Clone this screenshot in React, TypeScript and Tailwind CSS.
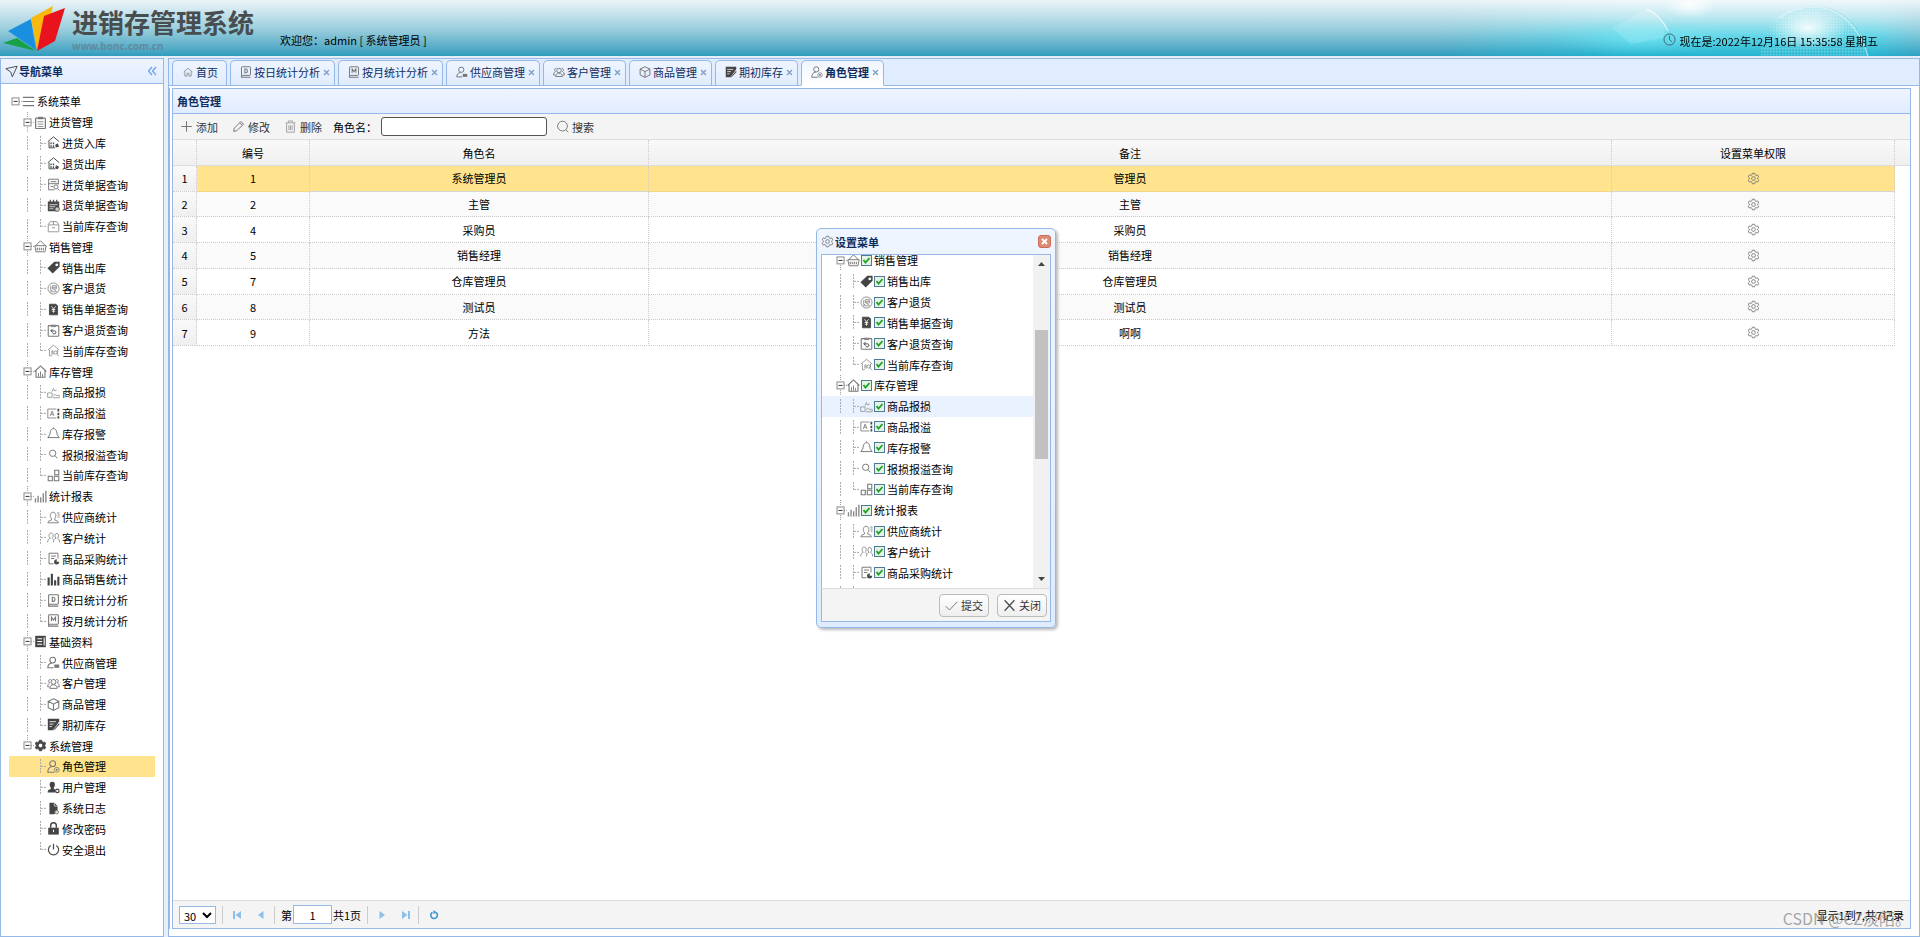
import React, { useState } from "react";

type IconName =
  | "menu" | "clipboard" | "houseIn" | "houseOut" | "docSearch" | "calendar" | "box" | "sale" | "tag"
  | "refund" | "yen" | "clipReturn" | "houseSearch" | "house" | "damage" | "overflow" | "bell" | "search"
  | "blocks" | "bars" | "supplier" | "people" | "purchase" | "barsDark" | "docD" | "docM" | "data"
  | "userTag" | "group" | "cube" | "edit" | "gearDark" | "role" | "userGear" | "log" | "lock" | "power"
  | "home" | "gear" | "plus" | "pencil" | "trash" | "find" | "check" | "cross" | "clock" | "nav";

const D = "#4a4a4a";
const G = "#777777";

const gearPath =
  "M6.6 1.5h2.8l.5 1.9 1.3.8 1.9-.6 1.4 2.4-1.4 1.3v1.4l1.4 1.3-1.4 2.4-1.9-.6-1.3.8-.5 1.9H6.6l-.5-1.9-1.3-.8-1.9.6L1.5 10l1.4-1.3V7.3L1.5 6l1.4-2.4 1.9.6 1.3-.8z";

const icons: Record<IconName, React.ReactNode> = {
  menu: <path d="M1 3h14M1 8h14M1 13h14" stroke={G} strokeWidth="1.500" />,
  clipboard: <><rect x="2" y="2.500" width="12" height="13" rx="1" stroke={G} strokeWidth="1.500" /><path d="M5 1h6v3H5z" fill={G} /><path d="M4.500 7h7M4.500 10h7M4.500 13h7" stroke={G} /></>,
  houseIn: <><path d="M1 7 8 1l7 6M2.500 7v7.500H10" stroke={D} strokeWidth="1.200" /><path d="M5 8v2M8 8v2M5 11.500v2M8 11.500v2" stroke={D} strokeWidth="1.600" /><path d="M10 11l3-2 2 4-4 1z" fill={D} /></>,
  houseOut: <><path d="M1 7 8 1l7 6M2.500 7v7.500H10" stroke={D} strokeWidth="1.200" /><path d="M5 8v2M8 8v2M5 11.500v2M8 11.500v2" stroke={D} strokeWidth="1.600" /><path d="M10 14l1-4 4 2-2 3z" fill={D} /></>,
  docSearch: <><path d="M14 8V1.500H2v13h7M2 7h12M4.500 4.500h7M4.500 10.500h3" stroke={G} strokeWidth="1.200" /><circle cx="11" cy="11" r="2.500" stroke={G} strokeWidth="1.200" /><path d="m13 13 2.500 2.500" stroke={G} strokeWidth="1.200" /></>,
  calendar: <><path d="M1 3h14v7l-3 5H1z" fill={D} /><path d="M4 1v4M8 1v4M12 1v4" stroke={D} strokeWidth="1.500" /><path d="M3 7h10M3 9.500h7M3 12h5" stroke="#fff" strokeWidth=".9" /><circle cx="12.500" cy="12.500" r="2.800" stroke={D} fill="#ccc" /></>,
  box: <><path d="M1.500 5.500 4 2h8l2.500 3.500v9h-13zM1.500 6h13M8 2v4M6 9.500h4" stroke="#999" strokeWidth="1.200" /></>,
  sale: <><path d="M2 7 8 1l6 6M1 7h14l-1.500 7.500h-11z" stroke={G} strokeWidth="1.200" /><path d="M4 9.500v3M6.500 9.500v3M9 9.500v3M11.500 9.500v3" stroke={G} strokeWidth="1.300" /></>,
  tag: <path d="M9 1h6.500v6L7 15.500.5 9zM12 3a1.800 1.800 0 1 0 .1 3.600A1.800 1.800 0 0 0 12 3z" fill="#444" fillRule="evenodd" />,
  refund: <><circle cx="8" cy="8" r="6.800" stroke={G} /><path d="M6.500 4.500h5v4h-5zM6.500 6.500h5M8 8.500l3.500 3M4.500 5v5.500h2M4 12h8" stroke={G} strokeWidth=".9" /></>,
  yen: <><path d="M3 1.500h8l2 2v11H3z" fill="#444" stroke="#444" /><path d="m5.500 4 2.500 3.500L10.500 4M8 7.500V12M5.800 8h4.400M5.800 10h4.400" stroke="#fff" /></>,
  clipReturn: <><rect x="1.500" y="2" width="13" height="13" rx="1" stroke={G} strokeWidth="1.300" /><path d="M5 .8h6v3H5z" fill="#888" /><path d="M7 6 4.500 8.500 7 10.500M5 8.500h4.500c2 0 2 3.500 0 3.500H7" stroke={D} strokeWidth="1.200" /></>,
  houseSearch: <><path d="M1 7.500 8 1.500l7 6M3 7v7.500h3M13 7v5" stroke="#888" /><path d="M6 13V8.500h1.500V13" stroke="#888" /><circle cx="10.500" cy="10.500" r="2" stroke="#888" /><path d="m12 12 2.500 3" stroke="#888" /></>,
  house: <><path d="M.8 8 8 1.200 15.200 8M2.500 7v8h11V7" stroke={G} strokeWidth="1.300" /><path d="M5.500 14.500V10M8 14.500V8M10.500 14.500V11" stroke={G} strokeWidth="1.100" /></>,
  damage: <path d="M.8 8.500h5.500V14H.8zM8 12.500c1-3 2-3 3-1h4v3H7.500M6 7l2-4 1 3 3-1" stroke="#999" strokeWidth="1.100" />,
  overflow: <><path d="M11.500 2.500H1v11h10.500" stroke={G} /><path d="m4 11 2.300-6L8.500 11M4.800 9h3" stroke={G} /><path d="M14 2v3.500M14 7v3M14 11.500V14" stroke={D} strokeWidth="2.200" /></>,
  bell: <path d="M1 13h14L12.500 9.500C12 4 10.500 2 8 2S4 4 3.500 9.500zM8 .5V2" stroke={G} strokeWidth="1.200" />,
  search: <><circle cx="7" cy="6.500" r="3.900" stroke={G} strokeWidth="1.200" /><path d="m9.800 9.500 3.200 3.300" stroke={G} strokeWidth="1.200" /></>,
  blocks: <path d="M1.500 9h5v5.500h-5zM9 9h5.500v5.500H9zM9.500 1.500h5V7h-5z" stroke={G} strokeWidth="1.300" />,
  bars: <path d="M1.800 10v5.500M5 7v8.500M8.200 9v6.500M11.400 4v11.500M14.600 1v14.500" stroke="#888" strokeWidth="1.700" />,
  supplier: <path d="M1 14.500h13l-1-2-3.500-1.500V9.500c2.500-3 1.500-8-2-8s-4.500 5-2 8V11L2 12.500zM12.500 2.500h3M13 5h2.500M13 7.500h2.500" stroke={G} strokeWidth="1.100" />,
  people: <path d="M.8 14c0-3 1.500-4.500 3.200-5C1.500 6 2.500 2.500 5 2.500S8.500 6 6.500 9M8 14c0-3 1-4.500 3-5C9 6.500 9.500 3 12 3s3 4 1 6c1.500.5 2.500 2.500 2.500 5M6.500 9 8 10.500" stroke="#888" strokeWidth="1.100" />,
  purchase: <><path d="M13.500 8V1.500h-11v13H8M5 5h6M5 8h4" stroke={G} strokeWidth="1.200" /><path d="M12 9v3h3a3.200 3.200 0 1 1-3-3z" fill={D} /></>,
  barsDark: <path d="M2 5.500v10M6 1v14.500M10 9v6.500M14 4.500v11" stroke="#444" strokeWidth="2.600" />,
  docD: <><rect x="2" y="1" width="12" height="11.500" rx="1" stroke={G} strokeWidth="1.300" /><path d="M2 12v3h12M6.500 4v5H8c2.500 0 2.500-5 0-5z" stroke={G} strokeWidth="1.400" /></>,
  docM: <><rect x="2" y="1" width="12" height="11.500" rx="1" stroke={G} strokeWidth="1.300" /><path d="M2 12v3h12M5.500 9V4L8 7.500 10.500 4v5" stroke={G} strokeWidth="1.400" /></>,
  data: <><path d="M1.500 1h13v14h-13z" fill="#444" /><path d="M4 4.500h6M4 8h6M4 11.500h6M12.500 3v10" stroke="#fff" strokeWidth="1.300" /></>,
  userTag: <><circle cx="7" cy="5" r="3.500" stroke={G} strokeWidth="1.300" /><path d="M8 14.500H1c0-3.500 2-5.500 5-6" stroke={G} strokeWidth="1.300" /><path d="M9 10.500h6v4H9z" fill={G} /></>,
  group: <><circle cx="8" cy="6" r="3" stroke={G} strokeWidth="1.200" /><path d="M3.500 14c0-3 2-4.500 4.500-4.500s4.500 1.500 4.500 4.500zM4.500 3C2 2.500 1.500 6 3.200 7.500 1.500 8.500.8 10 .8 12H3M11.500 3c2.500-.5 3 3 1.300 4.500 1.700 1 2.400 2.500 2.400 4.500H13" stroke={G} strokeWidth="1.200" /></>,
  cube: <path d="m8 1 6.500 3v8L8 15.200 1.500 12V4zM1.500 4 8 7.500 14.500 4M8 7.500v7.500" stroke={G} strokeWidth="1.300" />,
  edit: <><path d="M1 1h14v3L8 15H1z" fill="#444" /><path d="M3 4.500h8M3 7.500h5M3 10.500h3" stroke="#fff" /><path d="m15 5.500-6.500 8-1.500 2 2.500-.8L15.500 8z" fill="#444" stroke="#fff" strokeWidth=".6" /></>,
  gearDark: <path d={gearPath + "M8 5.200a2.800 2.800 0 1 0 .1 5.600A2.800 2.800 0 0 0 8 5.200z"} fill="#444" stroke="#444" strokeWidth="1" fillRule="evenodd" />,
  role: <><circle cx="7" cy="4.500" r="3.500" stroke={G} strokeWidth="1.300" /><path d="M9 15H1c0-4 2-6.500 5.500-7" stroke={G} strokeWidth="1.300" /><circle cx="12" cy="12" r="3" stroke={G} /><circle cx="12" cy="12" r="1.200" fill={G} /></>,
  userGear: <><path d="M6.500.8c4 0 4 4.500 1.700 7.700 0 1 1.300 1.500 1.800 2V14H.8c0-3 1.500-3.500 3.700-4.300C5 9.500 5 9 4.800 8.500 2.500 5.300 2.500.8 6.500.8z" fill="#444" /><circle cx="12.700" cy="12.200" r="2.100" stroke="#444" strokeWidth="1.500" fill="#fff" /></>,
  log: <><path d="M3 1h6l4 4v5l-4 5H3z" fill="#444" /><path d="M9 1v4h4" stroke="#fff" strokeWidth=".8" /><circle cx="12" cy="12.500" r="2.200" stroke={G} fill="#ddd" /></>,
  lock: <><path d="M1.500 7h13v8.500h-13z" fill="#444" /><path d="M4.500 7V4.500a3.500 3.500 0 0 1 7 0V7" stroke="#444" strokeWidth="1.700" /><path d="M8 9.500v3" stroke="#fff" strokeWidth="1.300" /></>,
  power: <path d="M4.500 3a6.300 6.300 0 1 0 7 0M8 1v7" stroke={D} strokeWidth="1.500" />,
  home: <path d="M1 8 8 2l7 6M3 7v7.500h3.500V10h3v4.500H13V7" stroke="#888" strokeWidth="1.300" />,
  gear: <><path d={gearPath} stroke={G} strokeWidth="1.100" /><circle cx="8" cy="8" r="2.300" stroke={G} strokeWidth="1.100" /></>,
  plus: <path d="M8 1.500v13M1.500 8h13" stroke={G} strokeWidth="1.300" />,
  pencil: <path d="m2 14 .8-4 8.200-8.200 3.200 3.200L6 13.200zM9.500 3.500l3 3" stroke={G} strokeWidth="1.200" />,
  trash: <path d="M2 3.500h12M5.500 3V1.200h5V3M3.200 4v11h9.600V4M6 6.500v6M8 6.500v6M10 6.500v6" stroke="#999" strokeWidth="1.100" />,
  find: <><circle cx="8" cy="7.500" r="6" stroke={G} strokeWidth="1.200" /><path d="m12.300 12 2.700 3" stroke={G} strokeWidth="1.200" /></>,
  check: <path d="m1 9 4.500 4.500L15 3.500" stroke={G} strokeWidth="1.200" />,
  cross: <path d="m2 1.500 12 13M14 1.500l-12 13" stroke={D} strokeWidth="1.500" />,
  clock: <><circle cx="8" cy="8" r="6.800" stroke="#3c5a64" strokeWidth="1.100" /><path d="M8 3.500V8l3 3" stroke="#3c5a64" strokeWidth="1.100" /></>,
  nav: <path d="M1 4.500 15 1.500 9 14.500 7 8.500z" stroke={D} strokeWidth="1.200" />,
};

function Icon({ name, className = "size-[13px]" }: { name: IconName; className?: string }) {
  return (
    <svg viewBox="0 0 16 16" fill="none" aria-hidden="true" className={`shrink-0 ${className}`}>
      {icons[name]}
    </svg>
  );
}

interface Group {
  label: string;
  icon: IconName;
  children: [string, IconName][];
}

const groups: Group[] = [
  { label: "进货管理", icon: "clipboard", children: [["进货入库", "houseIn"], ["退货出库", "houseOut"], ["进货单据查询", "docSearch"], ["退货单据查询", "calendar"], ["当前库存查询", "box"]] },
  { label: "销售管理", icon: "sale", children: [["销售出库", "tag"], ["客户退货", "refund"], ["销售单据查询", "yen"], ["客户退货查询", "clipReturn"], ["当前库存查询", "houseSearch"]] },
  { label: "库存管理", icon: "house", children: [["商品报损", "damage"], ["商品报溢", "overflow"], ["库存报警", "bell"], ["报损报溢查询", "search"], ["当前库存查询", "blocks"]] },
  { label: "统计报表", icon: "bars", children: [["供应商统计", "supplier"], ["客户统计", "people"], ["商品采购统计", "purchase"], ["商品销售统计", "barsDark"], ["按日统计分析", "docD"], ["按月统计分析", "docM"]] },
  { label: "基础资料", icon: "data", children: [["供应商管理", "userTag"], ["客户管理", "group"], ["商品管理", "cube"], ["期初库存", "edit"]] },
  { label: "系统管理", icon: "gearDark", children: [["角色管理", "role"], ["用户管理", "userGear"], ["系统日志", "log"], ["修改密码", "lock"], ["安全退出", "power"]] },
];

function Toggle({ root, last }: { root?: boolean; last?: boolean }) {
  return (
    <svg viewBox="0 0 13 21" fill="none" preserveAspectRatio="none" className="h-full w-[13px] shrink-0" aria-hidden="true">
      {!root && <path d="M6.500 0v6" stroke="#999" strokeDasharray="1 1" />}
      {!root && !last && <path d="M6.500 15v6" stroke="#999" strokeDasharray="1 1" />}
      <path d="M10 10.500h3" stroke="#999" strokeDasharray="1 1" />
      <rect x="3" y="7" width="7" height="7" fill="#fff" stroke="#8a8a8a" />
      <path d="M4.500 10.500h4" stroke="#333" />
    </svg>
  );
}

function Join({ last }: { last: boolean }) {
  return (
    <svg viewBox="0 0 13 21" fill="none" preserveAspectRatio="none" className="h-full w-[13px] shrink-0" aria-hidden="true">
      <path d={last ? "M6.500 3v8" : "M6.500 3v15"} stroke="#aaa" strokeDasharray="2 1" />
      <path d="M7 10.500h6" stroke="#aaa" strokeDasharray="2 1" />
    </svg>
  );
}

function Line({ show }: { show: boolean }) {
  return (
    <svg viewBox="0 0 13 21" fill="none" preserveAspectRatio="none" className="h-full w-[13px] shrink-0" aria-hidden="true">
      {show && <path d="M6.500 3v15" stroke="#aaa" strokeDasharray="2 1" />}
    </svg>
  );
}

function TreeRow({
  level, label, icon, last = false, lineShown = true, check = false, tone = "",
}: {
  level: 0 | 1 | 2; label: string; icon: IconName; last?: boolean; lineShown?: boolean; check?: boolean; tone?: string;
}) {
  const [checked, setChecked] = useState(true);
  return (
    <li className={`flex min-h-0 items-center whitespace-nowrap ${tone}`}>
      {level > 0 && <span className="w-3 shrink-0" />}
      {level === 2 ? <><Line show={lineShown} /><Join last={last} /></> : <Toggle root={level === 0} last={last} />}
      <Icon name={icon} />
      {check ? (
        <label className="flex items-center">
          <input type="checkbox" checked={checked} onChange={() => setChecked(!checked)} className="peer sr-only" />
          <span className="ml-px grid size-[11px] place-items-center border border-[#4d7a94] bg-[#e4f3e4] text-[#21a121]">
            <svg viewBox="0 0 9 9" fill="none" className={checked ? "size-[9px]" : "hidden"} aria-hidden="true">
              <path d="m1.500 4 2 2.500 4-4.500" stroke="currentColor" strokeWidth="1.800" />
            </svg>
          </span>
          <span className="pl-[2px]">{label}</span>
        </label>
      ) : (
        <a href="#" className="pl-[2px]">{label}</a>
      )}
    </li>
  );
}

function HeaderArt() {
  return (
    <svg viewBox="0 0 480 56" preserveAspectRatio="none" className="absolute right-0 top-0 h-full w-[480px]" aria-hidden="true">
      <defs>
        <linearGradient id="fall" x1="0" y1="0" x2="0" y2="1">
          <stop offset="0" stopColor="#f1f7fa" />
          <stop offset=".3" stopColor="#bfe9f1" />
          <stop offset=".65" stopColor="#62d6e8" />
          <stop offset="1" stopColor="#24b4d0" />
        </linearGradient>
        <linearGradient id="side">
          <stop offset="0" stopColor="#000" />
          <stop offset=".4" stopColor="#fff" />
          <stop offset=".9" stopColor="#fff" />
          <stop offset="1" stopColor="#222" />
        </linearGradient>
        <mask id="sides"><rect width="480" height="56" fill="url(#side)" /></mask>
        <radialGradient id="glow">
          <stop offset="0" stopColor="#fff" stopOpacity=".9" />
          <stop offset="1" stopColor="#fff" stopOpacity="0" />
        </radialGradient>
        <radialGradient id="shine">
          <stop offset="0" stopColor="#7cecf8" stopOpacity=".5" />
          <stop offset="1" stopColor="#7cecf8" stopOpacity="0" />
        </radialGradient>
        <pattern id="dots" width="3" height="3" patternUnits="userSpaceOnUse">
          <rect width="1.500" height="1.500" fill="#fff" opacity=".25" />
        </pattern>
      </defs>
      <g mask="url(#sides)">
        <rect width="480" height="56" fill="url(#fall)" />
        <ellipse cx="200" cy="38" rx="90" ry="18" fill="url(#shine)" />
        <path d="M172 28 209 8l17 17-3 13-32 6z" fill="#fff" opacity=".14" />
        <path d="M206 10c8 1 17 10 22 21" stroke="#fff" strokeWidth="1.500" fill="none" opacity=".6" />
        <ellipse cx="250" cy="4" rx="26" ry="14" fill="url(#glow)" />
        <circle cx="374" cy="60" r="54" fill="#57cde2" opacity=".2" />
        <circle cx="374" cy="60" r="54" fill="url(#dots)" />
        <path d="M340 18c10-8 22-11 34-11 26 0 46 22 54 49" stroke="#fff" strokeWidth="1.200" fill="none" opacity=".5" />
        <ellipse cx="368" cy="28" rx="40" ry="22" fill="url(#glow)" />
      </g>
    </svg>
  );
}

function TopBar() {
  return (
    <header className="relative flex h-14 shrink-0 overflow-hidden bg-linear-to-b from-[#edf4f9] via-[#9dd0de] to-[#2e9dbe]">
      <HeaderArt />
      <div className="relative flex w-[280px] shrink-0">
        <svg viewBox="0 0 66 56" className="h-14 w-[66px]" aria-hidden="true">
          <path d="M3 43 17 38 36 51z" fill="#17a247" />
          <path d="M8 31 31 19 36 50z" fill="#1a8fe0" />
          <path d="m31 18 22-12-2 8-14 36z" fill="#f9b80e" />
          <path d="m44 16 21-8-10 33-18 10z" fill="#e8131c" />
        </svg>
        <div className="pl-1.5 pt-2">
          <h1 className="text-[26px] leading-7 font-bold whitespace-nowrap text-[#484d50]">进销存管理系统</h1>
          <p className="text-[10px] leading-5 font-bold text-[#61899a]">www.bonc.com.cn</p>
        </div>
      </div>
      <p className="relative pt-8 leading-4 whitespace-nowrap">欢迎您：admin [ 系统管理员 ]</p>
      <p className="relative mr-[42px] ml-auto flex items-start pt-[33px] leading-4 whitespace-nowrap">
        <Icon name="clock" className="mr-[3px] size-[13px]" />
        现在是:2022年12月16日 15:35:58 星期五
      </p>
    </header>
  );
}

function Sidebar() {
  return (
    <nav className="flex w-[164px] shrink-0 flex-col border border-[#95b8e7] bg-white">
      <div className="flex h-[25px] shrink-0 items-center border-b border-[#95b8e7] bg-linear-to-b from-[#eff5ff] to-[#e0ecff] px-1 text-[#0e2d5f]">
        <Icon name="nav" />
        <h2 className="pl-px font-bold">导航菜单</h2>
        <button type="button" aria-label="收起" className="ml-auto pr-0.5">
          <svg viewBox="0 0 10 10" className="size-[10px]" fill="none" stroke="#6b9fe0" strokeWidth="1.200" aria-hidden="true">
            <path d="M5 1 1.500 5 5 9M9 1 5.500 5 9 9" />
          </svg>
        </button>
      </div>
      <ul className="mx-2 mt-[7px] grid h-[769px] shrink-0 auto-rows-fr">
        <TreeRow level={0} label="系统菜单" icon="menu" />
        {groups.map((g, gi) => {
          const lastGroup = gi === groups.length - 1;
          return (
            <React.Fragment key={g.label}>
              <TreeRow level={1} label={g.label} icon={g.icon} last={lastGroup} />
              {g.children.map(([label, icon], i) => (
                <TreeRow
                  key={label}
                  level={2}
                  label={label}
                  icon={icon}
                  lineShown={!lastGroup}
                  last={i === g.children.length - 1}
                  tone={label === "角色管理" ? "bg-[#ffe48d]" : ""}
                />
              ))}
            </React.Fragment>
          );
        })}
      </ul>
    </nav>
  );
}

const tabs: [string, IconName][] = [
  ["首页", "home"], ["按日统计分析", "docD"], ["按月统计分析", "docM"], ["供应商管理", "userTag"],
  ["客户管理", "group"], ["商品管理", "cube"], ["期初库存", "edit"], ["角色管理", "role"],
];

function TabStrip() {
  return (
    <div className="flex h-[27px] shrink-0 items-end gap-[3px] border-b border-[#95b8e7] bg-[#e0ecff] pl-[3px]">
      {tabs.map(([label, icon], i) => {
        const active = i === tabs.length - 1;
        return (
          <div
            key={label}
            className={`flex items-center rounded-t-[5px] border border-[#95b8e7] pb-[2px] pl-[9px] text-[#0e2d5f] ${
              active ? "-mb-px h-[26px] border-b-white bg-linear-to-b from-[#eff5ff] to-white font-bold" : "h-[25px] border-b-0 bg-linear-to-b from-[#eff5ff] to-[#e0ecff]"
            } ${i === 0 ? "pr-2" : "pr-1"}`}
          >
            <Icon name={icon} className={i === 0 ? "mx-px size-[10px]" : "size-3"} />
            <button type="button" className="pl-[2px] whitespace-nowrap">{label}</button>
            {i > 0 && (
              <button type="button" aria-label={`关闭${label}`} className="pl-[3px] pt-px">
                <svg viewBox="0 0 7 7" className="size-[7px]" aria-hidden="true">
                  <path d="m1 1 5 5M6 1 1 6" stroke="#7f9cc4" strokeWidth="1.300" />
                </svg>
              </button>
            )}
          </div>
        );
      })}
    </div>
  );
}

const roles: [number, string, string][] = [
  [1, "系统管理员", "管理员"], [2, "主管", "主管"], [4, "采购员", "采购员"], [5, "销售经理", "销售经理"],
  [7, "仓库管理员", "仓库管理员"], [8, "测试员", "测试员"], [9, "方法", "啊啊"],
];

function RoleTable() {
  const head = "border-r border-b border-dotted border-[#ccc] border-b-[#ddd] p-0 font-normal [border-bottom-style:solid]";
  const cell = "border-r border-b border-dotted border-[#ccc] p-0";
  return (
    <table className="h-[206px] w-full table-fixed border-separate border-spacing-0 text-center">
      <colgroup>
        <col className="w-[24px]" />
        <col className="w-[113px]" />
        <col className="w-[339px]" />
        <col />
        <col className="w-[283px]" />
        <col className="w-[15px]" />
      </colgroup>
      <thead>
        <tr className="h-[26px] bg-linear-to-b from-[#f9f9f9] to-[#efefef]">
          <th className={head} />
          <th className={head}>编号</th>
          <th className={head}>角色名</th>
          <th className={head}>备注</th>
          <th className={head}>设置菜单权限</th>
          <th className="border-b border-[#ddd] p-0" />
        </tr>
      </thead>
      <tbody>
        {roles.map(([id, name, note], i) => {
          const tone = i === 0 ? "bg-[#ffe48d]" : i % 2 ? "bg-[#fafafa]" : "bg-white";
          return (
            <tr key={id}>
              <td className={`${cell} bg-linear-to-b from-[#f9f9f9] to-[#efefef]`}>{i + 1}</td>
              <td className={`${cell} ${tone}`}>{id}</td>
              <td className={`${cell} ${tone}`}>{name}</td>
              <td className={`${cell} ${tone}`}>{note}</td>
              <td className={`${cell} ${tone}`}>
                <button type="button" aria-label={`设置${name}菜单权限`} className="block w-full">
                  <Icon name="gear" className="mx-auto size-[13px]" />
                </button>
              </td>
              <td className="p-0" />
            </tr>
          );
        })}
      </tbody>
    </table>
  );
}

function ToolButton({ icon, label }: { icon: IconName; label: string }) {
  return (
    <button type="button" className="flex items-center gap-[3px] text-[#333]">
      <Icon name={icon} />
      {label}
    </button>
  );
}

function PageArrow({ label, d }: { label: string; d: string }) {
  return (
    <button type="button" aria-label={label} className="grid w-6 place-items-center">
      <svg viewBox="0 0 10 10" className="size-[10px]" aria-hidden="true">
        <path d={d} fill="#8cc0ea" />
      </svg>
    </button>
  );
}

function Divider() {
  return <span className="h-[18px] w-px bg-[#ccc]" />;
}

function Pager() {
  return (
    <footer className="relative flex h-7 shrink-0 items-center border-t border-[#ddd] bg-[#f4f4f4] pl-[6px]">
      <select aria-label="每页记录数" defaultValue="30" className="mr-[6px] h-[18px] w-[37px] border border-[#95b8e7] bg-white">
        <option>30</option>
        <option>50</option>
      </select>
      <Divider />
      <span className="flex pr-px pl-0.5">
        <PageArrow label="首页" d="M1 1h2v8H1zM9 1v8L3.500 5z" />
        <PageArrow label="上一页" d="M7.500 1v8L2 5z" />
      </span>
      <Divider />
      <label htmlFor="page" className="pl-[6px]">第</label>
      <input id="page" defaultValue="1" className="mx-px h-[19px] w-[39px] border border-[#95b8e7] bg-white text-center" />
      <span className="pr-[6px]">共1页</span>
      <Divider />
      <span className="flex pl-0.5">
        <PageArrow label="下一页" d="M2.500 1v8L8 5z" />
        <PageArrow label="末页" d="M1 1v8l5.500-4zM7 1h2v8H7z" />
      </span>
      <Divider />
      <button type="button" aria-label="刷新" className="pl-[10px]">
        <svg viewBox="0 0 10 10" className="size-[10px]" fill="none" aria-hidden="true">
          <path d="M3.500 2.300a3.300 3.300 0 1 0 3.500.2" stroke="#3f96cc" strokeWidth="1.600" />
          <path d="m4.500 0 3 2.300-3 2z" fill="#3f96cc" />
        </svg>
      </button>
      <span className="mr-1.5 ml-auto">显示1到7,共7记录</span>
      <span className="pointer-events-none absolute -right-px top-[7px] text-[16px] leading-5 whitespace-nowrap text-[#808080]/70">CSDN @CZ淡陌。</span>
    </footer>
  );
}

function MenuDialog() {
  const shown = groups.slice(1, 4);
  return (
    <section
      role="dialog"
      aria-label="设置菜单"
      className="absolute top-[228px] left-[816px] flex w-[240px] flex-col rounded-[5px] border border-[#95b8e7] bg-linear-to-b from-[#eff5ff] to-[#dfebfe] px-1 pb-[5px] shadow-[2px_2px_3px_#bbb]"
    >
      <div className="flex h-[25px] items-center font-bold text-[#0e2d5f]">
        <Icon name="gear" />
        <h2 className="pl-px">设置菜单</h2>
        <button type="button" aria-label="关闭窗口" className="ml-auto grid size-[13px] place-items-center rounded-[3px] border border-[#c8705a] bg-[#e08a72]">
          <svg viewBox="0 0 7 7" className="size-[7px]" aria-hidden="true">
            <path d="m1 1 5 5M6 1 1 6" stroke="#fff" strokeWidth="1.800" />
          </svg>
        </button>
      </div>
      <div className="flex h-[334px] overflow-hidden border border-b-0 border-[#95b8e7] bg-white">
        <ul className="-mt-[5px] grid h-[354px] min-w-0 flex-1 auto-rows-fr">
          {shown.map((g, gi) => (
            <React.Fragment key={g.label}>
              <TreeRow level={1} label={g.label} icon={g.icon} check />
              {g.children.slice(0, gi === 2 ? 3 : 5).map(([label, icon], i) => (
                <TreeRow key={label} level={2} label={label} icon={icon} check last={i === 4} tone={label === "商品报损" ? "bg-[#eaf2ff]" : ""} />
              ))}
            </React.Fragment>
          ))}
          <li className="flex min-h-0 pl-3" aria-hidden="true"><Line show /><Join last={false} /></li>
        </ul>
        <div className="flex w-[17px] flex-col items-center bg-[#f1f1f1]">
          <svg viewBox="0 0 17 17" className="size-[17px]" aria-hidden="true"><path d="m5 11 3.500-4 3.500 4z" fill="#444" /></svg>
          <span className="mt-[58px] h-[129px] w-[13px] bg-[#c1c1c1]" />
          <svg viewBox="0 0 17 17" className="mt-auto size-[17px]" aria-hidden="true"><path d="m5 6 3.500 4L12 6z" fill="#444" /></svg>
        </div>
      </div>
      <div className="flex h-[34px] items-center justify-end gap-2 border border-[#95b8e7] border-t-[#ddd] bg-[#f4f4f4] pr-[3px] text-[#333]">
        {([["提交", "check"], ["关闭", "cross"]] as [string, IconName][]).map(([label, icon]) => (
          <button key={label} type="button" className="flex h-[23px] items-center gap-[3px] rounded-[4px] border border-[#bbb] bg-linear-to-b from-white to-[#eee] px-[5px]">
            <Icon name={icon} />
            {label}
          </button>
        ))}
      </div>
    </section>
  );
}

export default function App() {
  return (
    <div className="relative flex h-screen flex-col overflow-hidden bg-white font-['Noto_Sans_CJK_SC',sans-serif] text-[11px] leading-4 text-black">
      <TopBar />
      <div className="flex min-h-0 flex-1 bg-[#e6eef8] pt-[2px]">
        <Sidebar />
        <main className="ml-1 flex min-w-0 flex-1 flex-col border border-[#95b8e7] bg-white">
          <TabStrip />
          <div className="mt-[2px] mr-2 mb-[7px] flex min-h-0 flex-1 flex-col border-l border-[#95b8e7] pl-[2px]">
            <section className="flex min-h-0 flex-1 flex-col border border-[#95b8e7]">
              <h2 className="flex h-[25px] shrink-0 items-center border-b border-[#95b8e7] bg-linear-to-b from-[#eff5ff] to-[#e0ecff] pl-1 font-bold text-[#0e2d5f]">角色管理</h2>
              <div className="flex h-[26px] shrink-0 items-center border-b border-[#ddd] bg-[#f4f4f4] pl-[7px]">
                <div className="flex gap-[14px]">
                  <ToolButton icon="plus" label="添加" />
                  <ToolButton icon="pencil" label="修改" />
                  <ToolButton icon="trash" label="删除" />
                </div>
                <label htmlFor="role-name" className="pr-1 pl-[11px]">角色名：</label>
                <input id="role-name" className="mr-[9px] h-[19px] w-[166px] rounded-[3px] border border-[#555] bg-white px-1" />
                <ToolButton icon="find" label="搜索" />
              </div>
              <RoleTable />
              <div className="flex-1" />
              <Pager />
            </section>
          </div>
        </main>
      </div>
      <MenuDialog />
    </div>
  );
}
